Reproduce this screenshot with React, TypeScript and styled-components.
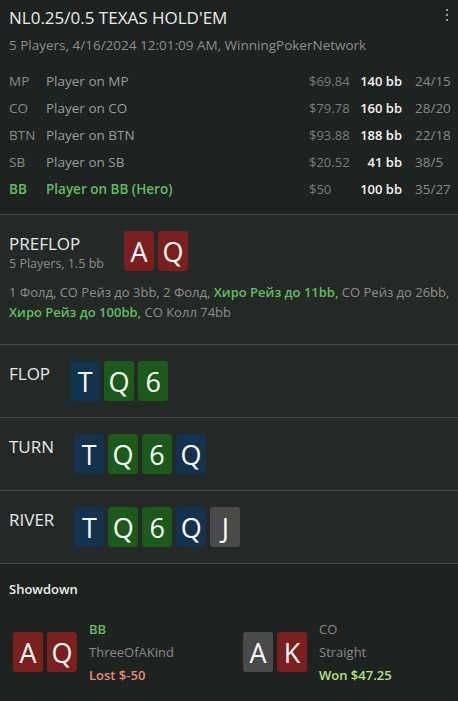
import React from 'react';
import styled, { createGlobalStyle } from 'styled-components';

const GlobalStyle = createGlobalStyle`
  html, body {
    margin: 0;
    padding: 0;
    background: #1e2220;
  }
  body {
    font-family: 'Open Sans', 'Noto Sans', sans-serif;
    color: #e6e6e6;
  }
`;

type Suit = 'h' | 's' | 'c' | 'd';

const suitColors: Record<Suit, string> = {
  h: '#7a1e1e',
  s: '#4a4a4a',
  c: '#1b5a1b',
  d: '#13324d',
};

const Page = styled.div`
  width: 458px;
  min-height: 701px;
  background: #1e2220;
`;

const Header = styled.header`
  position: relative;
  padding: 5px 9px 12px;
  border-bottom: 1px solid #474a48;
`;

const Title = styled.h1`
  margin: 0;
  font-size: 17px;
  font-weight: 400;
  line-height: 26px;
  color: #ececec;
`;

const Subtitle = styled.div`
  margin-top: 4px;
  font-size: 13.5px;
  line-height: 20px;
  color: #8e8e8e;
`;

const MenuDots = styled.button`
  position: absolute;
  top: 6px;
  right: 9px;
  padding: 0;
  border: none;
  background: none;
  color: #9a9a9a;
  display: flex;
`;

const PlayerTable = styled.div`
  margin-top: 12px;
  display: grid;
  grid-template-columns: 37px 1fr 46px 47px 47px;
  grid-auto-rows: 27px;
  align-items: center;
  font-size: 13.5px;
`;

const Cell = styled.span<{ $tone?: 'pos' | 'name' | 'money' | 'bb' | 'ratio'; $hero?: boolean }>`
  white-space: nowrap;
  font-size: ${({ $tone }) => ($tone === 'money' || $tone === 'bb' ? '13px' : 'inherit')};
  color: ${({ $tone, $hero }) =>
    $hero && ($tone === 'pos' || $tone === 'name')
      ? '#5fbf5f'
      : $tone === 'bb'
      ? '#f2f2f2'
      : $tone === 'money'
      ? '#7c7c7c'
      : $tone === 'name'
      ? '#9c9c9c'
      : '#8a8a8a'};
  font-weight: ${({ $tone, $hero }) => ($tone === 'bb' || ($hero && ($tone === 'pos' || $tone === 'name')) ? 600 : 400)};
  text-align: ${({ $tone }) => ($tone === 'bb' ? 'right' : 'left')};
  padding-left: ${({ $tone }) => ($tone === 'ratio' ? '13px' : '0')};
`;

const Street = styled.section`
  background: #242827;
  padding: 16px 9px;
  border-bottom: 1px solid #474a48;
`;

const StreetHead = styled.div`
  display: flex;
  align-items: flex-start;
  gap: 20px;
`;

const StreetInfo = styled.div`
  display: flex;
  flex-direction: column;
`;

const StreetName = styled.div`
  font-size: 17px;
  line-height: 22px;
  padding-top: 2px;
  color: #e8e8e8;
`;

const StreetSub = styled.div`
  font-size: 12.5px;
  line-height: 18px;
  color: #8e8e8e;
`;

const Cards = styled.div`
  display: flex;
  gap: 4px;
`;

const CardBox = styled.div<{ $suit: Suit }>`
  width: 30px;
  height: 40px;
  box-sizing: border-box;
  padding-top: 2px;
  border-radius: 3px;
  background: ${({ $suit }) => suitColors[$suit]};
  color: #fafafa;
  font-size: 27px;
  line-height: 38px;
  text-align: center;
`;

const Actions = styled.p`
  margin: 9px -6px 6px 0;
  font-size: 13px;
  line-height: 20px;
  color: #8e8e8e;
`;

const HeroAction = styled.span`
  color: #5fbf5f;
  font-weight: 600;
`;

const Showdown = styled.section`
  padding: 15px 13px 20px;
  background: #1e2220;
`;

const ShowdownTitle = styled.h2`
  margin: 0 0 0 -4px;
  font-size: 13px;
  font-weight: 600;
  line-height: 20px;
  color: #ececec;
`;

const Hands = styled.div`
  margin-top: 17px;
  display: grid;
  grid-template-columns: 230px 1fr;
`;

const Hand = styled.div`
  display: flex;
  align-items: center;
  gap: 12px;
`;

const HandInfo = styled.div`
  display: flex;
  flex-direction: column;
  margin-top: 2px;
  font-size: 13px;
  line-height: 23px;
`;

const HandLine = styled.span<{ $tone: 'hero' | 'muted' | 'lost' | 'won' }>`
  color: ${({ $tone }) =>
    $tone === 'hero' ? '#5fbf5f' : $tone === 'lost' ? '#e98a76' : $tone === 'won' ? '#b6e37c' : '#8a8a8a'};
  font-weight: ${({ $tone }) => ($tone === 'muted' ? 400 : 600)};
`;

const Card = ({ c }: { c: string }) => <CardBox $suit={c[1] as Suit}>{c[0]}</CardBox>;

const players = [
  { pos: 'MP', name: 'Player on MP', money: '$69.84', bb: '140 bb', ratio: '24/15' },
  { pos: 'CO', name: 'Player on CO', money: '$79.78', bb: '160 bb', ratio: '28/20' },
  { pos: 'BTN', name: 'Player on BTN', money: '$93.88', bb: '188 bb', ratio: '22/18' },
  { pos: 'SB', name: 'Player on SB', money: '$20.52', bb: '41 bb', ratio: '38/5' },
  { pos: 'BB', name: 'Player on BB (Hero)', money: '$50', bb: '100 bb', ratio: '35/27', hero: true },
];

const board = ['Td', 'Qc', '6c', 'Qd', 'Js'];

export default function App() {
  return (
    <Page>
      <GlobalStyle />
      <Header>
        <Title>NL0.25/0.5 TEXAS HOLD'EM</Title>
        <Subtitle>5 Players, 4/16/2024 12:01:09 AM, WinningPokerNetwork</Subtitle>
        <MenuDots aria-label="menu">
          <svg width="4" height="18" viewBox="0 0 4 18">
            <rect x="1" y="3" width="2" height="2" fill="currentColor" />
            <rect x="1" y="8" width="2" height="2" fill="currentColor" />
            <rect x="1" y="13" width="2" height="2" fill="currentColor" />
          </svg>
        </MenuDots>
        <PlayerTable>
          {players.map((p) => (
            <React.Fragment key={p.pos}>
              <Cell $tone="pos" $hero={p.hero}>{p.pos}</Cell>
              <Cell $tone="name" $hero={p.hero}>{p.name}</Cell>
              <Cell $tone="money">{p.money}</Cell>
              <Cell $tone="bb">{p.bb}</Cell>
              <Cell $tone="ratio">{p.ratio}</Cell>
            </React.Fragment>
          ))}
        </PlayerTable>
      </Header>

      <Street>
        <StreetHead>
          <StreetInfo>
            <StreetName>PREFLOP</StreetName>
            <StreetSub>5 Players, 1.5 bb</StreetSub>
          </StreetInfo>
          <Cards>
            <Card c="Ah" />
            <Card c="Qh" />
          </Cards>
        </StreetHead>
        <Actions>
          1 Фолд, CO Рейз до 3bb, 2 Фолд, <HeroAction>Хиро Рейз до 11bb,</HeroAction> CO Рейз до 26bb,{' '}
          <HeroAction>Хиро Рейз до 100bb,</HeroAction> CO Колл 74bb
        </Actions>
      </Street>

      {[
        { name: 'FLOP', n: 3 },
        { name: 'TURN', n: 4 },
        { name: 'RIVER', n: 5 },
      ].map((s) => (
        <Street key={s.name}>
          <StreetHead>
            <StreetName>{s.name}</StreetName>
            <Cards>
              {board.slice(0, s.n).map((c) => (
                <Card key={c} c={c} />
              ))}
            </Cards>
          </StreetHead>
        </Street>
      ))}

      <Showdown>
        <ShowdownTitle>Showdown</ShowdownTitle>
        <Hands>
          <Hand>
            <Cards>
              <Card c="Ah" />
              <Card c="Qh" />
            </Cards>
            <HandInfo>
              <HandLine $tone="hero">BB</HandLine>
              <HandLine $tone="muted">ThreeOfAKind</HandLine>
              <HandLine $tone="lost">Lost $-50</HandLine>
            </HandInfo>
          </Hand>
          <Hand>
            <Cards>
              <Card c="As" />
              <Card c="Kh" />
            </Cards>
            <HandInfo>
              <HandLine $tone="muted">CO</HandLine>
              <HandLine $tone="muted">Straight</HandLine>
              <HandLine $tone="won">Won $47.25</HandLine>
            </HandInfo>
          </Hand>
        </Hands>
      </Showdown>
    </Page>
  );
}
